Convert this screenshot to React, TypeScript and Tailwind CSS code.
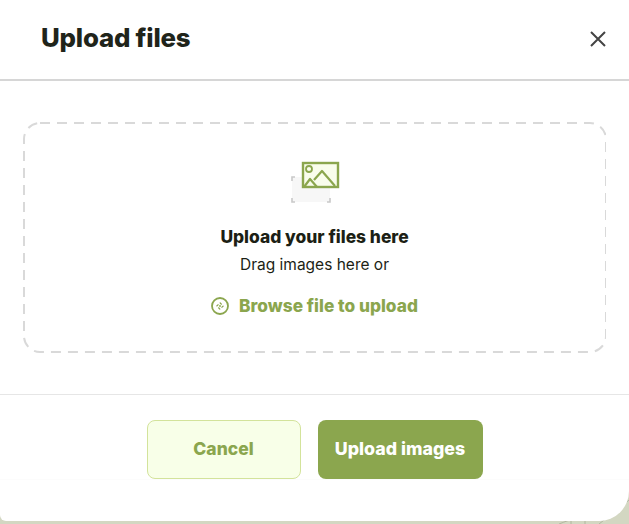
function UploadIcon() {
  return (
    <svg width="50" height="46" viewBox="0 0 50 46" fill="none">
      {/* grey frame behind the picture */}
      <rect x="2" y="19" width="38" height="25" fill="#f7f7f7" />
      <path d="M2 23v-4h3M2 40v4h3M37 44h3v-4" stroke="#c9c9c9" strokeWidth="1.6" />
      <rect x="13" y="5" width="35" height="24" fill="#f9fdec" stroke="#8ba64e" strokeWidth="2.4" />
      <circle cx="19" cy="11" r="3" fill="#f9fdec" stroke="#8ba64e" strokeWidth="1.8" />
      <path d="M14 29l6-8 7 8M24 22l8-9 13 15" stroke="#8ba64e" strokeWidth="2.2" strokeLinejoin="round" />
    </svg>
  );
}

function BrowseIcon() {
  return (
    <svg width="18" height="18" viewBox="0 0 18 18" fill="none">
      <circle cx="9" cy="9" r="8" stroke="#8ba64e" strokeWidth="1.8" />
      <path d="M9 5.8l3.2 3.2L9 12.2 5.8 9z" stroke="#8ba64e" strokeWidth="1.2" strokeDasharray="2.4 2.1" />
      <circle cx="9" cy="9" r="0.9" fill="#8ba64e" />
    </svg>
  );
}

function App() {
  return (
    <div className="relative h-[524px] w-[629px] overflow-hidden bg-[#d3d7c2] font-['Inter',sans-serif]">
      {/* map lines showing past the corner */}
      <svg className="absolute bottom-0 right-0" width="70" height="40" viewBox="0 0 70 40" fill="none">
        <path d="M0 40C25 30 50 25 70 2M40 40C50 32 60 25 70 16M12 40v-6M26 40v-6" stroke="#a9ad97" strokeWidth="0.8" />
      </svg>
      <div className="relative flex h-[521px] flex-col rounded-br-[30px] rounded-bl-[6px] bg-white">
        <header className="flex h-[81px] items-center justify-between border-b-2 border-[#d6d6d6] pb-[2px] pl-[41px] pr-[22px]">
          <h1 className="text-[25.8px] font-extrabold tracking-[-0.2px] text-[#20241a]">Upload files</h1>
          <button className="text-[#444444]">
            <svg width="18" height="18" viewBox="0 0 18 18" fill="none" stroke="currentColor" strokeWidth="2">
              <path d="M2 2l14 14M16 2L2 16" />
            </svg>
          </button>
        </header>

        <div className="px-[23px] pt-[41px]">
          <div className="relative flex h-[231px] flex-col items-center pt-[36px]">
            <svg className="absolute inset-0 h-full w-full" fill="none">
              <rect x="1" y="1" width="582" height="229" rx="16" stroke="#d9d9d9" strokeWidth="2" strokeDasharray="10 7" />
            </svg>
            <UploadIcon />
            <p className="mt-[21px] text-[17.4px] leading-[24px] font-extrabold text-[#1c1f15]">Upload your files here</p>
            <p className="mt-[6px] text-[15.5px] leading-[20px] text-[#1c1f15]">Drag images here or</p>
            <div className="mt-[19px] flex items-center gap-[10px]">
              <BrowseIcon />
              <span className="text-[17.3px] leading-[24px] font-extrabold text-[#8ba64e]">Browse file to upload</span>
            </div>
          </div>
        </div>

        <div className="mt-[41px] border-t border-[#e6e6e6] pt-[25px]">
          <div className="flex justify-center gap-[17px] border-b border-[#fcfcfc]">
            <button className="h-[59px] w-[154px] rounded-[8px] border border-[#d3e39b] bg-[#f8ffe8] text-[17.5px] font-extrabold text-[#8ba64e]">
              Cancel
            </button>
            <button className="h-[59px] w-[165px] rounded-[8px] bg-[#8ba64e] text-[17.8px] font-extrabold text-white">
              Upload images
            </button>
          </div>
        </div>
      </div>
    </div>
  );
}

export default App;
